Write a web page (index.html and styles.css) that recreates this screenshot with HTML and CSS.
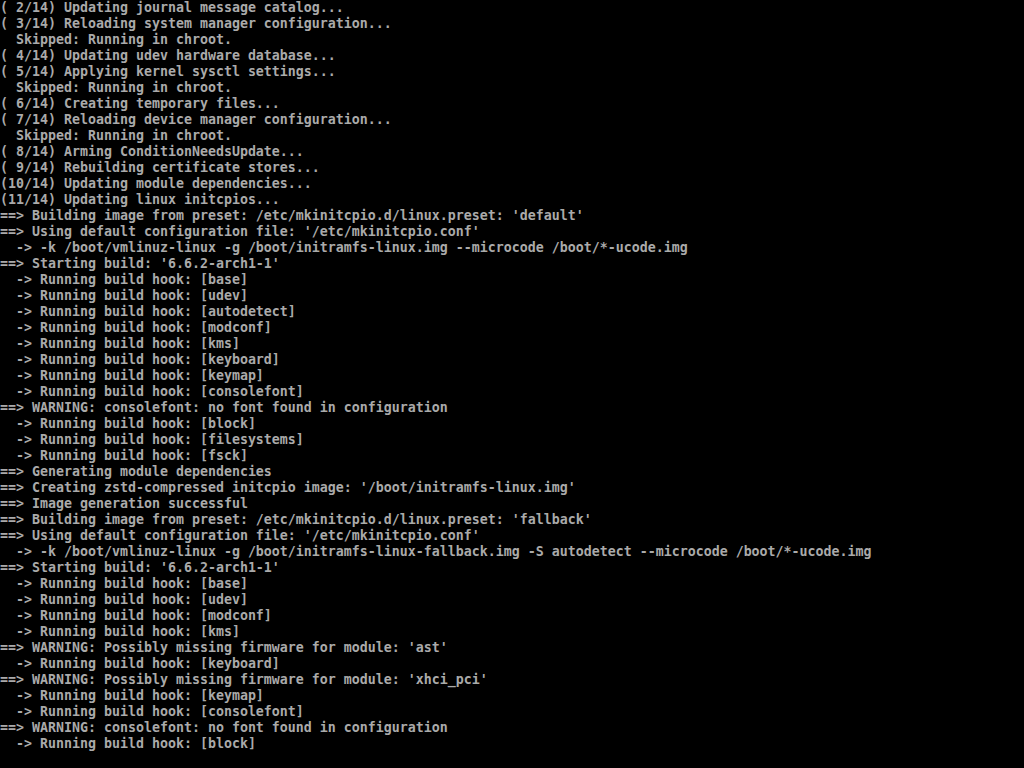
FILE: index.html
```html
<!DOCTYPE html>
<html>
<head>
<meta charset="utf-8">
<title>Console</title>
<link rel="stylesheet" href="styles.css">
</head>
<body>
<pre class="console">( 2/14) Updating journal message catalog...
( 3/14) Reloading system manager configuration...
  Skipped: Running in chroot.
( 4/14) Updating udev hardware database...
( 5/14) Applying kernel sysctl settings...
  Skipped: Running in chroot.
( 6/14) Creating temporary files...
( 7/14) Reloading device manager configuration...
  Skipped: Running in chroot.
( 8/14) Arming ConditionNeedsUpdate...
( 9/14) Rebuilding certificate stores...
(10/14) Updating module dependencies...
(11/14) Updating linux initcpios...
==> Building image from preset: /etc/mkinitcpio.d/linux.preset: 'default'
==> Using default configuration file: '/etc/mkinitcpio.conf'
  -> -k /boot/vmlinuz-linux -g /boot/initramfs-linux.img --microcode /boot/*-ucode.img
==> Starting build: '6.6.2-arch1-1'
  -> Running build hook: [base]
  -> Running build hook: [udev]
  -> Running build hook: [autodetect]
  -> Running build hook: [modconf]
  -> Running build hook: [kms]
  -> Running build hook: [keyboard]
  -> Running build hook: [keymap]
  -> Running build hook: [consolefont]
==> WARNING: consolefont: no font found in configuration
  -> Running build hook: [block]
  -> Running build hook: [filesystems]
  -> Running build hook: [fsck]
==> Generating module dependencies
==> Creating zstd-compressed initcpio image: '/boot/initramfs-linux.img'
==> Image generation successful
==> Building image from preset: /etc/mkinitcpio.d/linux.preset: 'fallback'
==> Using default configuration file: '/etc/mkinitcpio.conf'
  -> -k /boot/vmlinuz-linux -g /boot/initramfs-linux-fallback.img -S autodetect --microcode /boot/*-ucode.img
==> Starting build: '6.6.2-arch1-1'
  -> Running build hook: [base]
  -> Running build hook: [udev]
  -> Running build hook: [modconf]
  -> Running build hook: [kms]
==> WARNING: Possibly missing firmware for module: 'ast'
  -> Running build hook: [keyboard]
==> WARNING: Possibly missing firmware for module: 'xhci_pci'
  -> Running build hook: [keymap]
  -> Running build hook: [consolefont]
==> WARNING: consolefont: no font found in configuration
  -> Running build hook: [block]</pre>
</body>
</html>
```
FILE: styles.css
```css
html, body {
  margin: 0;
  padding: 0;
  background: #000;
  height: 100%;
}
body {
  width: 1024px;
  height: 768px;
  overflow: hidden;
}
.console {
  margin: 0;
  padding: 0;
  color: #aaaaaa;
  font-family: "DejaVu Sans Mono", "Liberation Mono", monospace;
  font-size: 13.29px;
  font-weight: bold;
  line-height: 16px;
  white-space: pre;
}
```
